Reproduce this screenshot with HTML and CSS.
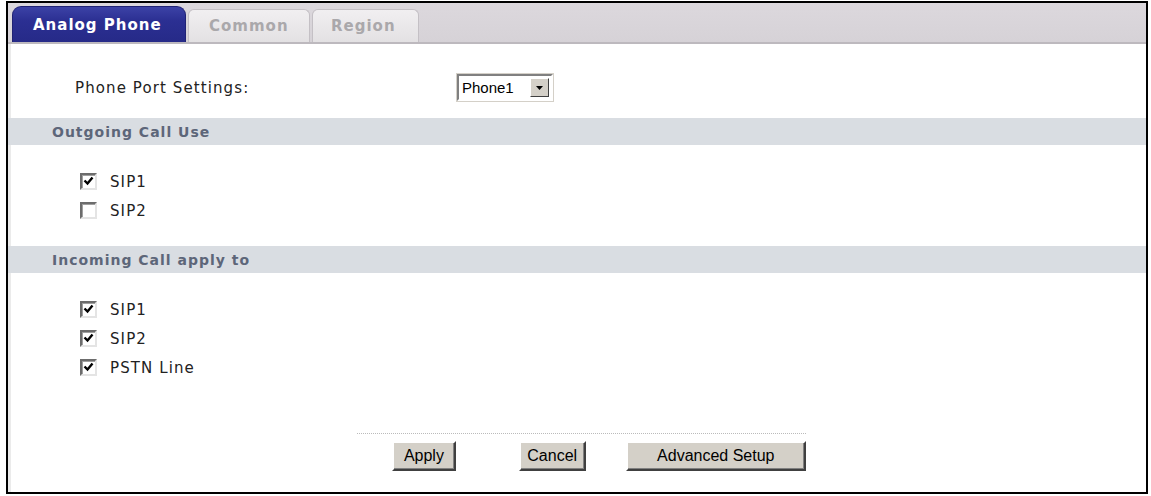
FILE: index.html
```html
<!DOCTYPE html>
<html lang="en">
<head>
<meta charset="UTF-8">
<title>Analog Phone</title>
<link rel="stylesheet" href="styles.css">
</head>
<body>

<div class="frame">
    <div class="tabbar">
        <div class="tab active">Analog Phone</div>
        <div class="tab">Common</div>
        <div class="tab">Region</div>
    </div>

    <div class="content">
        <div class="port-row">
            <span class="port-label">Phone Port Settings:</span>
            <div class="select">
                <span class="select-value">Phone1</span>
                <span class="select-arrow">
                    <svg width="7" height="4" viewBox="0 0 7 4"><path d="M0 0h7L3.5 4z" fill="#000"/></svg>
                </span>
            </div>
        </div>

        <div class="section-title">Outgoing Call Use</div>
        <div class="checks">
            <label class="check"><span class="box checked"></span>SIP1</label>
            <label class="check"><span class="box"></span>SIP2</label>
        </div>

        <div class="section-title">Incoming Call apply to</div>
        <div class="checks">
            <label class="check"><span class="box checked"></span>SIP1</label>
            <label class="check"><span class="box checked"></span>SIP2</label>
            <label class="check"><span class="box checked"></span>PSTN Line</label>
        </div>

        <div class="actions">
            <button class="btn btn-apply">Apply</button>
            <button class="btn btn-cancel">Cancel</button>
            <button class="btn btn-advanced">Advanced Setup</button>
        </div>
    </div>
</div>

</body>
</html>
```

FILE: styles.css
```css
body {
    margin: 0;
    background-color: #fff;
    font-family: "DejaVu Sans", Verdana, sans-serif;
    font-size: 15px;
    letter-spacing: 1.1px;
    color: #222;
}
.frame {
    margin: 1px 3px 0 6px;
    height: 489px;
    border: 2px solid #000;
    background-color: #fff;
    display: flex;
    flex-direction: column;
    overflow: hidden;
}
.tabbar {
    height: 37px;
    padding: 2px 0 0 4px;
    display: flex;
    align-items: flex-end;
    background: linear-gradient(#dcd8dd, #d6d2d7);
    border-bottom: 2px solid #bdb9be;
}
.tab {
    height: 33px;
    margin-right: 2px;
    padding: 0 0 0 20px;
    display: flex;
    align-items: center;
    font-weight: bold;
    font-size: 15px;
    letter-spacing: 1px;
    color: #aaa8ab;
    background: linear-gradient(#f1eff1, #e3e1e3);
    border: 1px solid #c4c0c5;
    border-bottom: none;
    border-radius: 6px 6px 0 0;
    box-sizing: border-box;
}
.tab:nth-child(2) {
    width: 122px;
}
.tab:nth-child(3) {
    width: 107px;
    padding-left: 18px;
}
.tab.active {
    width: 174px;
    height: 36px;
    color: #fff;
    background: linear-gradient(#3c42a6, #2b2f92 40%, #262a88);
    border-color: #1f2275;
    border-radius: 9px 9px 0 0;
}
.content {
    flex: 1;
    border-left: 3px solid #ebebeb;
    display: flex;
    flex-direction: column;
}
.port-row {
    height: 27px;
    margin-top: 30px;
    display: flex;
    align-items: center;
}
.port-label {
    width: 382px;
    padding-left: 64px;
    color: #222;
}
.select {
    width: 96px;
    height: 27px;
    display: flex;
    align-items: center;
    border: 2px solid;
    border-color: #808080 #fff #fff #808080;
    outline: 1px solid #d4d0c8;
    box-sizing: border-box;
    font-family: "Liberation Sans", Arial, sans-serif;
    font-size: 15px;
    letter-spacing: 0;
    color: #000;
}
.select-value {
    flex: 1;
    padding-left: 3px;
}
.select-arrow {
    width: 19px;
    height: 19px;
    margin-right: 2px;
    display: flex;
    align-items: center;
    justify-content: center;
    background-color: #d4d0c8;
    border: 1px solid;
    border-color: #fff #404040 #404040 #fff;
    box-sizing: border-box;
}
.section-title {
    height: 27px;
    margin-top: 17px;
    margin-left: -3px;
    padding-left: 44px;
    display: flex;
    align-items: center;
    background-color: #d9dde2;
    font-weight: bold;
    font-size: 14px;
    letter-spacing: 1px;
    color: #5d6679;
}
.checks {
    padding: 28px 0 10px 69px;
    display: flex;
    flex-direction: column;
    gap: 12px;
}
.check {
    display: flex;
    align-items: center;
    gap: 13px;
    height: 17px;
    color: #222;
}
.box {
    width: 17px;
    height: 17px;
    box-sizing: border-box;
    border: 2px solid;
    border-color: #6c6c6c #e4e4e4 #e4e4e4 #6c6c6c;
    box-shadow: inset 1px 1px 0 #a0a0a0;
    background-color: #fff;
    background-repeat: no-repeat;
    background-position: center;
}
.box.checked {
    background-image: url("data:image/svg+xml,%3Csvg xmlns='http://www.w3.org/2000/svg' width='11' height='11' viewBox='0 0 11 11'%3E%3Cpath d='M1.5 4.5l3 3 5-6' fill='none' stroke='%23000' stroke-width='2.4'/%3E%3C/svg%3E");
}
.actions {
    margin-top: auto;
    margin-bottom: 21px;
    margin-left: 346px;
    width: 449px;
    padding-top: 7px;
    border-top: 1px dotted #bbb;
    display: flex;
}
.btn {
    height: 30px;
    padding: 0;
    font-family: "Liberation Sans", Arial, sans-serif;
    font-size: 16px;
    letter-spacing: 0;
    color: #000;
    background-color: #d4d0c8;
    border: 2px solid;
    border-color: #fff #404040 #404040 #fff;
    box-shadow: inset -1px -1px 0 #808080;
}
.btn-apply {
    width: 64px;
    margin-left: 35px;
}
.btn-cancel {
    width: 67px;
    margin-left: 63px;
}
.btn-advanced {
    width: 181px;
    margin-left: 40px;
}
```
